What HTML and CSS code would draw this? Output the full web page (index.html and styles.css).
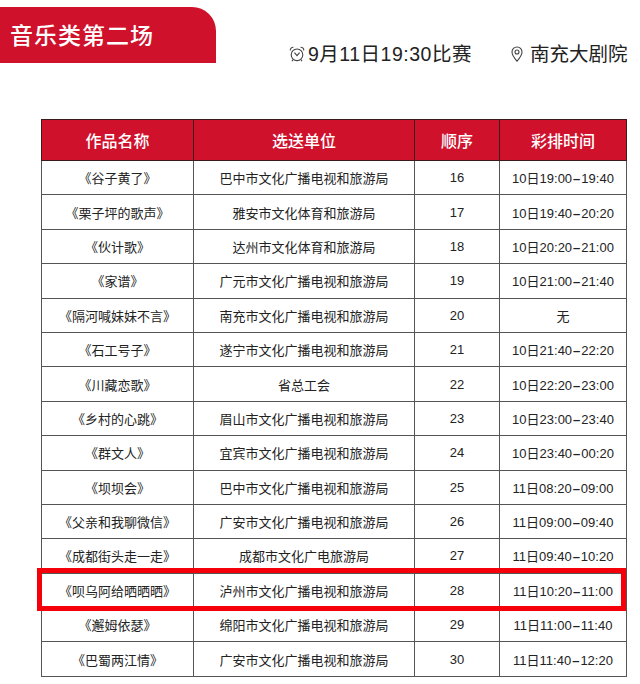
FILE: index.html
```html
<!DOCTYPE html>
<html lang="zh">
<head>
<meta charset="utf-8">
<title>音乐类第二场</title>
<link rel="stylesheet" href="styles.css">
</head>
<body>
<div class="page">
  <header class="top">
    <div class="banner">音乐类第二场</div>
    <div class="info">
      <span class="item when">
        <svg class="ico clock" viewBox="0 0 16 16" width="16" height="16">
          <circle cx="8" cy="8.8" r="5.8" fill="none" stroke="#444" stroke-width="1.1"/>
          <path d="M1.2 4.4 A3.2 3.2 0 0 1 4.4 1.2" fill="none" stroke="#444" stroke-width="1.1"/>
          <path d="M14.8 4.4 A3.2 3.2 0 0 0 11.6 1.2" fill="none" stroke="#444" stroke-width="1.1"/>
          <path d="M5.4 6.6 L8 9.6 L10.6 6.6" fill="none" stroke="#444" stroke-width="1.1"/>
          <path d="M4 13.6 L3 15.2 M12 13.6 L13 15.2" fill="none" stroke="#444" stroke-width="1.1"/>
        </svg>9月11日19:30比赛
      </span>
      <span class="item">
        <svg class="ico pin" viewBox="0 0 12 16" width="12" height="16">
          <path d="M6 15.2 C3.6 12.4 1 9.4 1 6 A5 5 0 0 1 11 6 C11 9.4 8.4 12.4 6 15.2 Z" fill="none" stroke="#444" stroke-width="1.1"/>
          <circle cx="6" cy="6" r="2" fill="none" stroke="#444" stroke-width="1.1"/>
        </svg>南充大剧院
      </span>
    </div>
  </header>

  <div class="table-wrap">
    <table class="sched">
      <colgroup>
        <col class="c1"><col class="c2"><col class="c3"><col class="c4">
      </colgroup>
      <thead>
        <tr><th>作品名称</th><th>选送单位</th><th>顺序</th><th>彩排时间</th></tr>
      </thead>
      <tbody>
        <tr><td>《谷子黄了》</td><td>巴中市文化广播电视和旅游局</td><td>16</td><td>10日19:00<b class="dash">–</b>19:40</td></tr>
        <tr><td>《栗子坪的歌声》</td><td>雅安市文化体育和旅游局</td><td>17</td><td>10日19:40<b class="dash">–</b>20:20</td></tr>
        <tr><td>《伙计歌》</td><td>达州市文化体育和旅游局</td><td>18</td><td>10日20:20<b class="dash">–</b>21:00</td></tr>
        <tr><td>《家谱》</td><td>广元市文化广播电视和旅游局</td><td>19</td><td>10日21:00<b class="dash">–</b>21:40</td></tr>
        <tr><td>《隔河喊妹妹不言》</td><td>南充市文化广播电视和旅游局</td><td>20</td><td>无</td></tr>
        <tr><td>《石工号子》</td><td>遂宁市文化广播电视和旅游局</td><td>21</td><td>10日21:40<b class="dash">–</b>22:20</td></tr>
        <tr><td>《川藏恋歌》</td><td>省总工会</td><td>22</td><td>10日22:20<b class="dash">–</b>23:00</td></tr>
        <tr><td>《乡村的心跳》</td><td>眉山市文化广播电视和旅游局</td><td>23</td><td>10日23:00<b class="dash">–</b>23:40</td></tr>
        <tr><td>《群文人》</td><td>宜宾市文化广播电视和旅游局</td><td>24</td><td>10日23:40<b class="dash">–</b>00:20</td></tr>
        <tr><td>《坝坝会》</td><td>巴中市文化广播电视和旅游局</td><td>25</td><td>11日08:20<b class="dash">–</b>09:00</td></tr>
        <tr><td>《父亲和我聊微信》</td><td>广安市文化广播电视和旅游局</td><td>26</td><td>11日09:00<b class="dash">–</b>09:40</td></tr>
        <tr><td>《成都街头走一走》</td><td>成都市文化广电旅游局</td><td>27</td><td>11日09:40<b class="dash">–</b>10:20</td></tr>
        <tr><td>《呗乌阿给晒晒晒》</td><td>泸州市文化广播电视和旅游局</td><td>28</td><td>11日10:20<b class="dash">–</b>11:00</td></tr>
        <tr><td>《邂姆依瑟》</td><td>绵阳市文化广播电视和旅游局</td><td>29</td><td>11日11:00<b class="dash">–</b>11:40</td></tr>
        <tr><td>《巴蜀两江情》</td><td>广安市文化广播电视和旅游局</td><td>30</td><td>11日11:40<b class="dash">–</b>12:20</td></tr>
      </tbody>
    </table>
    <div class="highlight"></div>
  </div>
</div>
</body>
</html>
```

FILE: styles.css
```css
* { box-sizing: border-box; }
html, body {
  margin: 0;
  padding: 0;
  background: #fff;
}
body {
  font-family: "Liberation Sans", "Noto Sans CJK SC", sans-serif;
  color: #222;
}
.page {
  width: 640px;
  height: 684px;
  overflow: hidden;
  padding-top: 7px;
}
.top {
  display: flex;
  align-items: flex-end;
  height: 56px;
}
.banner {
  width: 216px;
  height: 56px;
  background: #d0112b;
  border-top-right-radius: 24px;
  color: #fff;
  font-family: "Noto Sans CJK SC", sans-serif;
  font-size: 23px;
  font-weight: 500;
  letter-spacing: 1px;
  line-height: 54px;
  padding-left: 10px;
}
.info {
  display: flex;
  align-items: center;
  gap: 39px;
  margin-left: 73px;
  margin-bottom: -3px;
  font-size: 19.5px;
  line-height: 24px;
  color: #222;
}
.item {
  display: flex;
  align-items: center;
}
.when {
  letter-spacing: 0.5px;
}
.ico {
  display: block;
  flex: none;
}
.clock { margin-right: 3px; }
.pin { margin-right: 7px; }

.table-wrap {
  position: relative;
  margin: 56px 0 0 41px;
  width: 585px;
}
.sched {
  width: 585px;
  border-collapse: collapse;
  table-layout: fixed;
}
.c1 { width: 152px; }
.c2 { width: 221px; }
.c3 { width: 85px; }
.c4 { width: 127px; }
.sched th,
.sched td {
  border: 1px solid #555;
  text-align: center;
  padding: 0;
  white-space: nowrap;
}
.sched th {
  background: #d0112b;
  color: #fff;
  font-family: "Noto Sans CJK SC", sans-serif;
  font-size: 16px;
  font-weight: 500;
  height: 41px;
  border-color: #3a1a1a;
}
.sched td {
  font-size: 13px;
  height: 34.4px;
  color: #222;
}
.dash {
  font-weight: bold;
  padding: 0 1px;
}
.highlight {
  position: absolute;
  left: -4px;
  top: 449px;
  width: 589px;
  height: 43px;
  border: 5px solid #f5000a;
  pointer-events: none;
}
```
